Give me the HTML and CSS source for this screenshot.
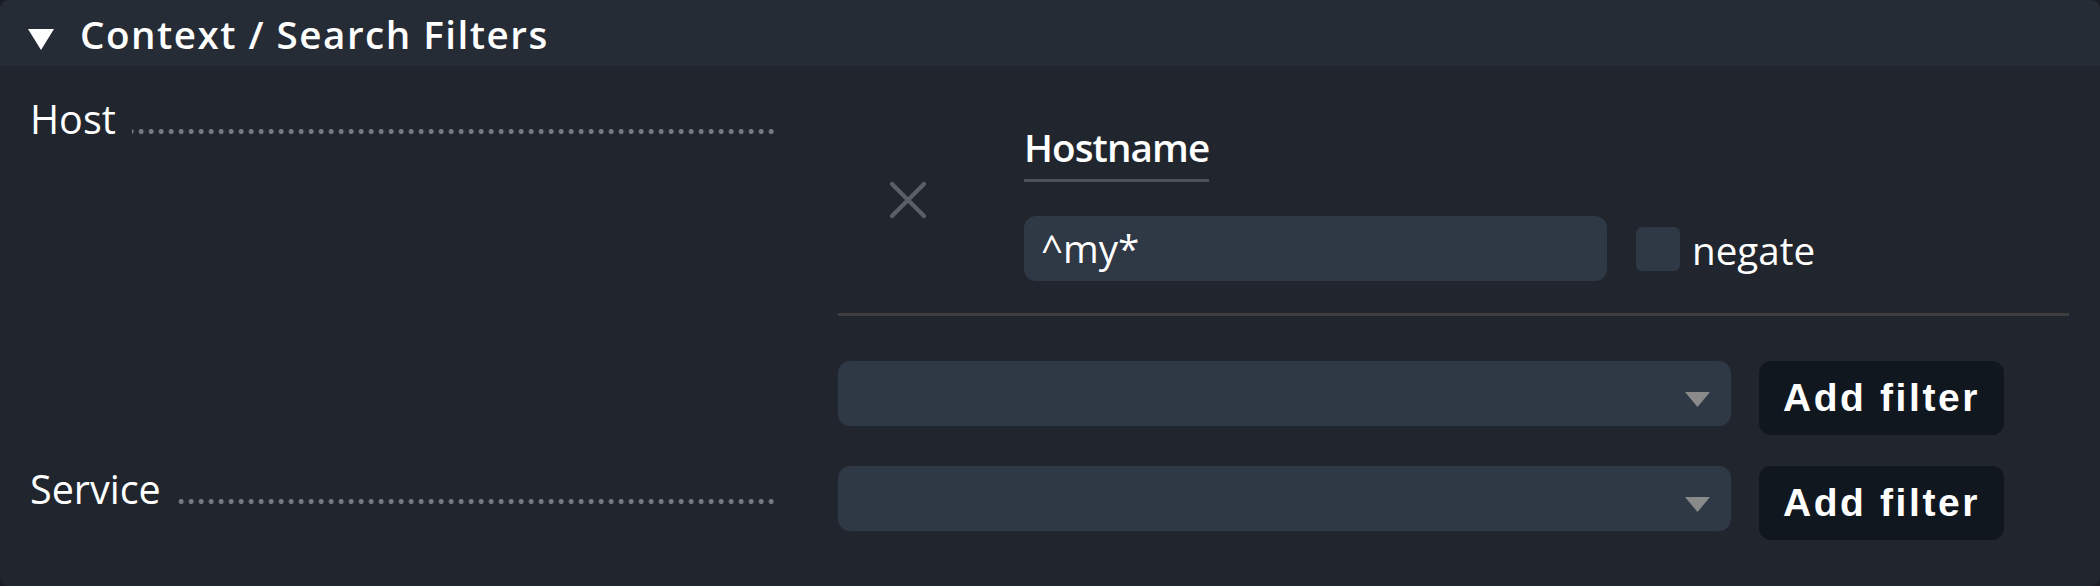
FILE: index.html
```html
<!DOCTYPE html>
<html>
<head>
<meta charset="utf-8">
<title>Context / Search Filters</title>
<link rel="stylesheet" href="styles.css">
</head>
<body>
<div class="panel">
  <div class="head">
    <svg class="tri" width="26" height="21" viewBox="0 0 26 21"><polygon points="0,0 26,0 13,21" fill="#ffffff"/></svg>
    <span class="title">Context / Search Filters</span>
  </div>
  <div class="body">
    <div class="row row-host">
      <div class="lbl"><span class="lbl-text">Host</span><span class="dots"></span></div>
      <div class="ctl">
        <div class="filter">
          <div class="del">
            <svg width="38" height="38" viewBox="0 0 38 38"><path d="M3 3 L35 35 M35 3 L3 35" stroke="#5a5f68" stroke-width="4.2" stroke-linecap="round" fill="none"/></svg>
          </div>
          <div class="fcol">
            <div class="fname"><span class="fname-text">Hostname</span></div>
            <div class="fline">
              <div class="textbox">^my*</div>
              <span class="cb"></span>
              <span class="neg">negate</span>
            </div>
          </div>
        </div>
        <div class="sep"></div>
        <div class="addrow">
          <div class="select">
            <svg class="arrow" width="25" height="15" viewBox="0 0 25 15"><polygon points="0,0 25,0 12.5,15" fill="#8a8a8a"/></svg>
          </div>
          <button class="btn">Add filter</button>
        </div>
      </div>
    </div>
    <div class="row row-service">
      <div class="lbl"><span class="lbl-text">Service</span><span class="dots"></span></div>
      <div class="ctl">
        <div class="addrow addrow-first">
          <div class="select">
            <svg class="arrow" width="25" height="15" viewBox="0 0 25 15"><polygon points="0,0 25,0 12.5,15" fill="#8a8a8a"/></svg>
          </div>
          <button class="btn">Add filter</button>
        </div>
      </div>
    </div>
  </div>
</div>
</body>
</html>
```

FILE: styles.css
```css
html, body {
  margin: 0;
  padding: 0;
  background: #1a1e24;
}
body {
  font-family: "Open Sans", "Noto Sans", sans-serif;
  color: #ffffff;
}
.panel {
  width: 2100px;
  height: 586px;
  background: #21262e;
  border-radius: 9px;
  overflow: hidden;
}
.head {
  height: 66px;
  background: #262c36;
  display: flex;
  align-items: flex-start;
  padding-left: 28px;
  box-sizing: border-box;
}
.tri {
  display: block;
  margin-top: 29px;
  margin-right: 26px;
}
.title {
  margin-top: 11px;
  font-size: 38.6px;
  line-height: 46px;
  font-weight: 600;
  letter-spacing: 1.5px;
  white-space: nowrap;
}
.body {
  padding-top: 30px;
}
.row {
  display: flex;
  align-items: flex-start;
}
.row-service {
  margin-top: 31px;
}
.lbl {
  width: 838px;
  box-sizing: border-box;
  padding-left: 30px;
  padding-right: 62px;
  display: flex;
  align-items: baseline;
  font-size: 39.5px;
  line-height: 46px;
  white-space: nowrap;
}
.dots {
  flex: 1;
  height: 5px;
  margin-left: 16px;
  background-image: radial-gradient(circle at 5px 2.5px, #777b82 2.2px, rgba(119,123,130,0) 2.8px);
  background-size: 10px 5px;
  background-repeat: repeat-x;
  background-position: right top;
}
.ctl {
  flex: 1;
  padding-right: 31px;
}
.filter {
  display: flex;
  margin-top: 28px;
}
.del {
  width: 186px;
  box-sizing: border-box;
  padding-left: 51px;
  display: flex;
  align-items: center;
  margin-top: -6px;
}
.del svg {
  display: block;
}
.fcol {
  display: flex;
  flex-direction: column;
  align-items: flex-start;
}
.fname-text {
  display: inline-block;
  font-size: 38.6px;
  line-height: 46px;
  font-weight: 600;
  letter-spacing: -0.9px;
  padding-bottom: 9px;
  border-bottom: 3px solid #4d5159;
}
.fline {
  margin-top: 34px;
  display: flex;
  align-items: center;
}
.textbox {
  width: 583px;
  height: 65px;
  box-sizing: border-box;
  background: #2f3845;
  border-radius: 12px;
  padding: 9px 17px 0;
  font-size: 38.6px;
  line-height: 46px;
}
.cb {
  display: block;
  width: 44px;
  height: 44px;
  border-radius: 6px;
  background: #2f3845;
  margin-left: 29px;
}
.neg {
  margin-left: 12px;
  font-size: 38.6px;
  line-height: 46px;
  margin-top: 3px;
}
.sep {
  height: 3px;
  background: #3e3e3e;
  margin-top: 32px;
}
.addrow {
  display: flex;
  align-items: flex-start;
  gap: 28px;
  margin-top: 45px;
}
.addrow-first {
  margin-top: 0;
}
.select {
  width: 893px;
  height: 65px;
  box-sizing: border-box;
  background: #2f3845;
  border-radius: 12px;
  display: flex;
  justify-content: flex-end;
  align-items: center;
  padding-right: 21px;
}
.arrow {
  display: block;
  margin-top: 11px;
}
.btn {
  width: 245px;
  height: 74px;
  padding: 0;
  border: 0;
  border-radius: 12px;
  background: #11171e;
  color: #ffffff;
  font-family: "Liberation Sans", Arial, sans-serif;
  font-weight: 700;
  font-size: 39px;
  line-height: 74px;
  letter-spacing: 2.6px;
  text-align: center;
}
```
